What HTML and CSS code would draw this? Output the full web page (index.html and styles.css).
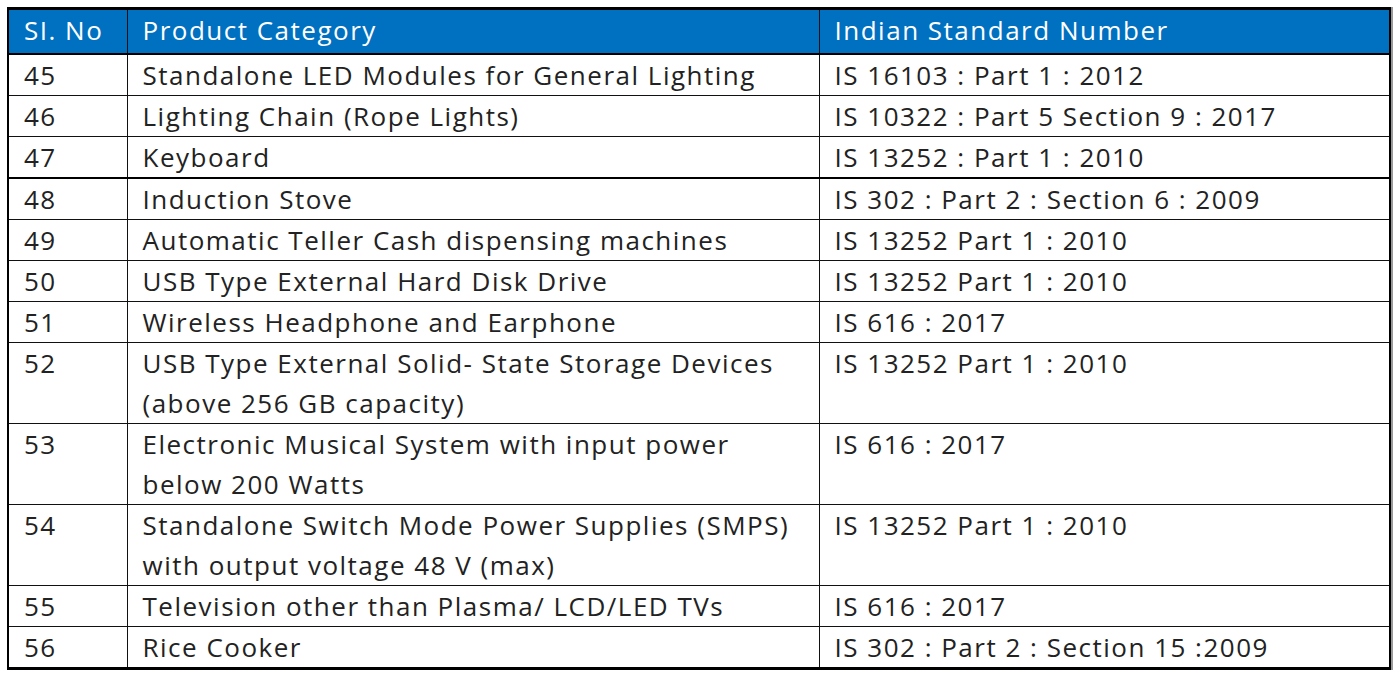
FILE: index.html
```html
<!DOCTYPE html>
<html>
<head>
<meta charset="utf-8">
<link rel="stylesheet" href="styles.css">
</head>
<body>
<table class="std-table">
  <colgroup>
    <col class="c-no">
    <col class="c-cat">
    <col class="c-std">
  </colgroup>
  <thead>
    <tr><th>SI. No</th><th>Product Category</th><th>Indian Standard Number</th></tr>
  </thead>
  <tbody>
    <tr><td>45</td><td>Standalone LED Modules for General Lighting</td><td>IS 16103 : Part 1 : 2012</td></tr>
    <tr><td>46</td><td>Lighting Chain (Rope Lights)</td><td>IS 10322 : Part 5 Section 9 : 2017</td></tr>
    <tr><td>47</td><td>Keyboard</td><td>IS 13252 : Part 1 : 2010</td></tr>
    <tr class="thick"><td>48</td><td>Induction Stove</td><td>IS 302 : Part 2 : Section 6 : 2009</td></tr>
    <tr><td>49</td><td>Automatic Teller Cash dispensing machines</td><td>IS 13252 Part 1 : 2010</td></tr>
    <tr><td>50</td><td>USB Type External Hard Disk Drive</td><td>IS 13252 Part 1 : 2010</td></tr>
    <tr><td>51</td><td>Wireless Headphone and Earphone</td><td>IS 616 : 2017</td></tr>
    <tr><td>52</td><td>USB Type External Solid- State Storage Devices<br>(above 256 GB capacity)</td><td>IS 13252 Part 1 : 2010</td></tr>
    <tr><td>53</td><td>Electronic Musical System with input power<br>below 200 Watts</td><td>IS 616 : 2017</td></tr>
    <tr><td>54</td><td>Standalone Switch Mode Power Supplies (SMPS)<br>with output voltage 48 V (max)</td><td>IS 13252 Part 1 : 2010</td></tr>
    <tr><td>55</td><td>Television other than Plasma/ LCD/LED TVs</td><td>IS 616 : 2017</td></tr>
    <tr><td>56</td><td>Rice Cooker</td><td>IS 302 : Part 2 : Section 15 :2009</td></tr>
  </tbody>
</table>
</body>
</html>
```

FILE: styles.css
```css
html, body {
  margin: 0;
  padding: 0;
  background: #ffffff;
}

body {
  padding: 7px 0 0 7px;
  font-family: "Open Sans", "Lato", sans-serif;
}

.std-table {
  border-collapse: collapse;
  width: 1384px;
  table-layout: fixed;
  border-top: 3px solid #000;
  border-left: 2px solid #000;
  border-bottom: 3px solid #000;
  border-right: 2px solid #000;
  box-shadow: 2px 0 0 #9a9a9a;
}

.c-no { width: 119px; }
.c-cat { width: 692px; }
.c-std { width: auto; }

.std-table th,
.std-table td {
  text-align: left;
  vertical-align: top;
  font-size: 26px;
  letter-spacing: 1.5px;
  line-height: 40px;
  padding: 0 0 0 15px;
  border: 1.5px solid #111;
  white-space: nowrap;
}

.std-table th {
  background: #0070c0;
  color: #ffffff;
  font-weight: 400;
  height: 40px;
  line-height: 40px;
  padding-bottom: 3px;
  border-bottom: 2px solid #000;
}

.std-table td {
  color: #222222;
}

.std-table tr.thick td {
  border-top: 2px solid #000;
}
```
